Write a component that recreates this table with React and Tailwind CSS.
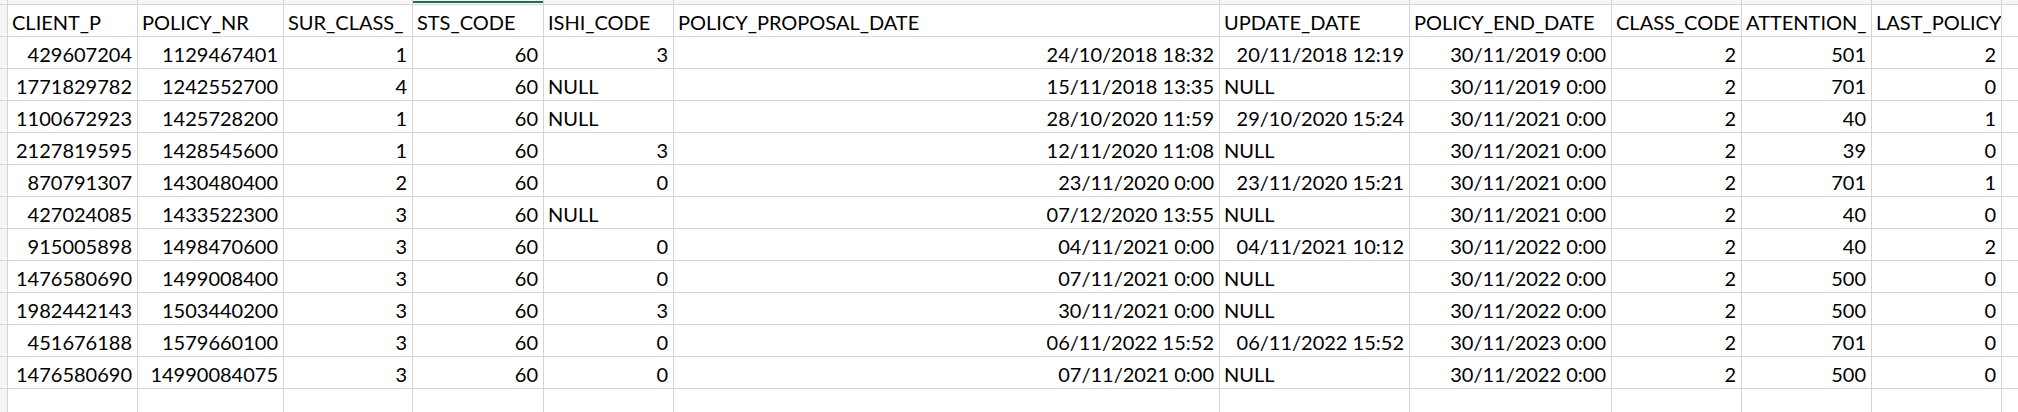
import React from 'react';

const headers = ['CLIENT_P', 'POLICY_NR', 'SUR_CLASS_', 'STS_CODE', 'ISHI_CODE', 'POLICY_PROPOSAL_DATE', 'UPDATE_DATE', 'POLICY_END_DATE', 'CLASS_CODE', 'ATTENTION_', 'LAST_POLICY'];

const rows = [
  ['429607204', '1129467401', '1', '60', '3', '24/10/2018 18:32', '20/11/2018 12:19', '30/11/2019 0:00', '2', '501', '2'],
  ['1771829782', '1242552700', '4', '60', 'NULL', '15/11/2018 13:35', 'NULL', '30/11/2019 0:00', '2', '701', '0'],
  ['1100672923', '1425728200', '1', '60', 'NULL', '28/10/2020 11:59', '29/10/2020 15:24', '30/11/2021 0:00', '2', '40', '1'],
  ['2127819595', '1428545600', '1', '60', '3', '12/11/2020 11:08', 'NULL', '30/11/2021 0:00', '2', '39', '0'],
  ['870791307', '1430480400', '2', '60', '0', '23/11/2020 0:00', '23/11/2020 15:21', '30/11/2021 0:00', '2', '701', '1'],
  ['427024085', '1433522300', '3', '60', 'NULL', '07/12/2020 13:55', 'NULL', '30/11/2021 0:00', '2', '40', '0'],
  ['915005898', '1498470600', '3', '60', '0', '04/11/2021 0:00', '04/11/2021 10:12', '30/11/2022 0:00', '2', '40', '2'],
  ['1476580690', '1499008400', '3', '60', '0', '07/11/2021 0:00', 'NULL', '30/11/2022 0:00', '2', '500', '0'],
  ['1982442143', '1503440200', '3', '60', '3', '30/11/2021 0:00', 'NULL', '30/11/2022 0:00', '2', '500', '0'],
  ['451676188', '1579660100', '3', '60', '0', '06/11/2022 15:52', '06/11/2022 15:52', '30/11/2023 0:00', '2', '701', '0'],
  ['1476580690', '14990084075', '3', '60', '0', '07/11/2021 0:00', 'NULL', '30/11/2022 0:00', '2', '500', '0'],
];

function Cell({ value, left }) {
  return (
    <div className={`bg-white overflow-hidden whitespace-nowrap flex items-end pb-[2px] ${left ? 'justify-start pl-[4px]' : 'justify-end pr-[5px]'}`}>
      {value}
    </div>
  );
}

export default function App() {
  return (
    <div
      className="w-[2018px] h-[412px] overflow-hidden grid gap-px bg-[#d5d5d5] text-black text-[20px] leading-[24px] grid-cols-[7px_129px_145px_128px_130px_129px_545px_189px_201px_129px_129px_129px_1fr] grid-rows-[4px_repeat(12,31px)_1fr]"
      style={{ fontFamily: 'Lato, "Open Sans", sans-serif' }}
    >
      {/* column header strip (cut off) */}
      <div className="bg-[#f6f6f6]" />
      {headers.map((h, i) => (
        <div key={h} className="bg-[#f6f6f6]">
          {i === 3 && <div className="mt-px h-[2px] bg-[#1e7145]" />}
        </div>
      ))}
      <div className="bg-[#f6f6f6]" />

      {/* header row */}
      <div className="bg-[#f6f6f6]" />
      {headers.map(h => <Cell key={h} value={h} left />)}
      <div className="bg-white" />

      {rows.map((r, ri) => (
        <React.Fragment key={ri}>
          <div className="bg-[#f6f6f6]" />
          {r.map((v, ci) => <Cell key={ci} value={v} left={v === 'NULL'} />)}
          <div className="bg-white" />
        </React.Fragment>
      ))}

      {/* empty trailing row */}
      <div className="bg-[#f6f6f6]" />
      {headers.map(h => <div key={h} className="bg-white" />)}
      <div className="bg-white" />
    </div>
  );
}
